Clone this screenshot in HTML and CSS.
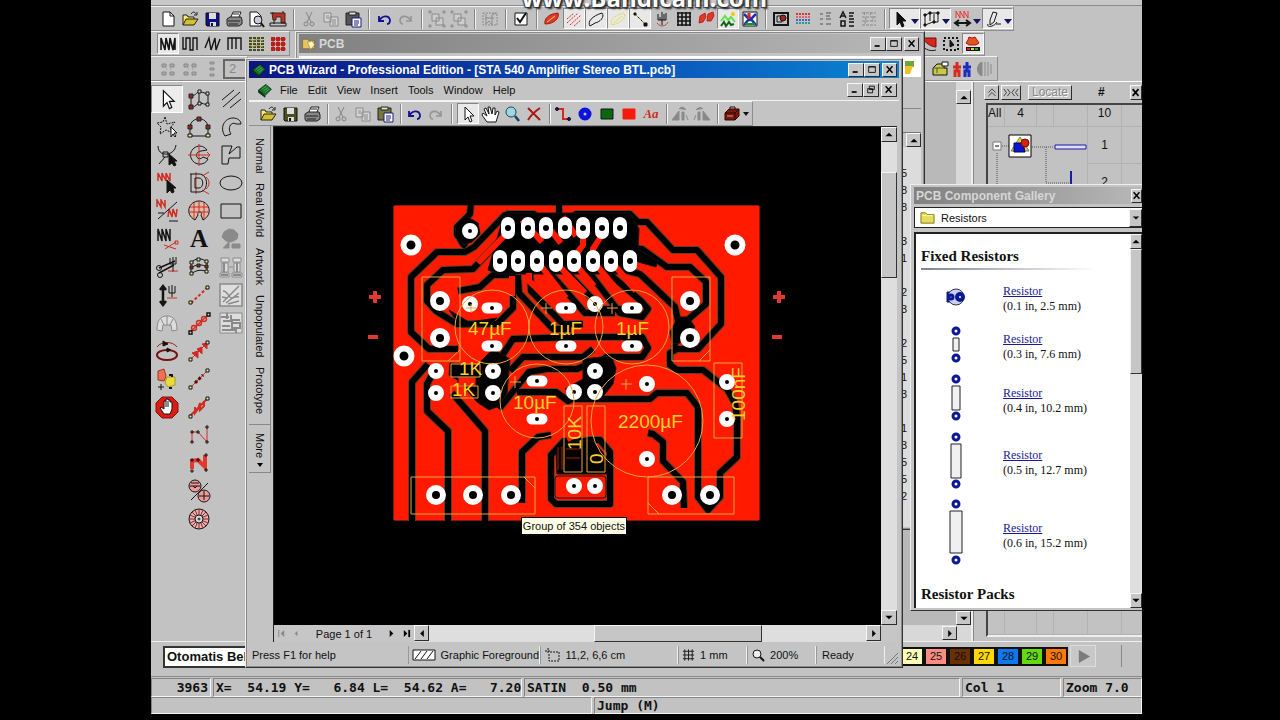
FILE: index.html
```html
<!DOCTYPE html>
<html lang="en">
<head>
<meta charset="utf-8">
<title>PCB Wizard - Professional Edition</title>
<link rel="stylesheet" href="styles.css">
</head>
<body>
<svg class="defs" aria-hidden="true">
  <defs>
    <symbol id="open" viewBox="0 0 20 20"><path d="M3 16V6h4l1 2h6v3" fill="#ffe96a" stroke="#222"/><path d="M3 16l3-6h12l-4 6z" fill="#d2c12b" stroke="#222"/><path d="M11 5c2-3 4-2 5 0m1-2v3h-3" stroke="#222"/></symbol>
    <symbol id="save" viewBox="0 0 20 20"><path d="M4 4h13v13H5l-1-1z" fill="var(--disk,#10108c)" stroke="#111"/><path d="M7 4h7v6H7zM8 13h6v4H8z" fill="#ddd" stroke="none"/><path d="M9 14h2v3H9z" fill="#111" stroke="none"/></symbol>
    <symbol id="print" viewBox="0 0 20 20"><path d="M7 8l2-5h8l-2 5" fill="#fff" stroke="#222"/><path d="M3 10l3-2h11l1 3v4l-3 2H4l-1-2z" fill="#888" stroke="#222"/><path d="M4 12h12M5 15h9M9 5h6" stroke="#222"/></symbol>
    <symbol id="cut" viewBox="0 0 20 20"><path d="M7 3l5 10M13 3L8 13" stroke="#858585"/><circle cx="7" cy="15" r="2" stroke="#858585"/><circle cx="13" cy="15" r="2" stroke="#858585"/></symbol>
    <symbol id="copy" viewBox="0 0 20 20"><path d="M3 4h7v9H3zM9 8h8v9H9z" fill="#d4d4d4" stroke="#8a8a8a"/><path d="M5 7h3M5 9h3M11 11h4M11 13h4M11 15h4" stroke="#8a8a8a"/></symbol>
    <symbol id="paste" viewBox="0 0 20 20"><path d="M3 4h13v12H3z" fill="var(--board,#77773a)" stroke="#222"/><path d="M6 3h7v3H6z" fill="#ddd" stroke="#222"/><path d="M9 9h9v9H9z" fill="#fff" stroke="#1b1b80"/><path d="M11 12h5M11 14h5M11 16h4" stroke="#1b1b80"/></symbol>
    <symbol id="undo" viewBox="0 0 20 20"><path d="M5 7v5h5M5 12c3-6 10-6 11-1 0 2-1 4-3 4" stroke="#101090" stroke-width="1.8"/></symbol>
    <symbol id="redo" viewBox="0 0 20 20"><path d="M15 7v5h-5M15 12c-3-6-10-6-11-1 0 2 1 4 3 4" stroke="#959595" stroke-width="1.6"/></symbol>
    <symbol id="arrow" viewBox="0 0 20 20"><path d="M7 3v13l3-3 2 5 2-1-2-5h4z" fill="#fff" stroke="#111"/></symbol>
    <symbol id="blackarrow" viewBox="0 0 20 20"><path d="M6 3v13l3-3 2 5 2-1-2-5h4z" fill="#111" stroke="#111"/></symbol>
    <symbol id="chip" viewBox="0 0 20 20"><path d="M2 10l9-7 7 6-8 8z" fill="#16702a" stroke="#052c0c"/><path d="M6 9l6-4M8 11l6-4M10 13l5-4" stroke="#55b060"/><path d="M2 10v3l8 6v-2" fill="#0b3a14" stroke="#052c0c"/></symbol>
    <symbol id="min" viewBox="0 0 12 10"><path d="M2 8h6" stroke="#000" stroke-width="2"/></symbol>
    <symbol id="max" viewBox="0 0 12 10"><path d="M2 1.500h8v7H2zM2 2h8" stroke="#000"/></symbol>
    <symbol id="close" viewBox="0 0 12 10"><path d="M2 1l7 8M9 1L2 9" stroke="#000" stroke-width="1.700"/></symbol>
    <symbol id="restore" viewBox="0 0 12 10"><path d="M4 1h6v4H4zM2 4h6v5H2z" fill="#c0c0c0" stroke="#000"/></symbol>
    <symbol id="up" viewBox="0 0 10 10"><path d="M1 7l4-4 4 4z" fill="#000" stroke="none"/></symbol>
    <symbol id="down" viewBox="0 0 10 10"><path d="M1 3l4 4 4-4z" fill="#000" stroke="none"/></symbol>
    <symbol id="left" viewBox="0 0 10 10"><path d="M7 1L3 5l4 4z" fill="#000" stroke="none"/></symbol>
    <symbol id="right" viewBox="0 0 10 10"><path d="M3 1l4 4-4 4z" fill="#000" stroke="none"/></symbol>
    <symbol id="pins" viewBox="0 0 20 20"><path d="M4 5h4v3H4zM12 5h4v3h-4zM4 13h4v3H4zM12 13h4v3h-4zM8 10h1M12 10h1" fill="#aaa" stroke="#888"/></symbol>
    <symbol id="grp" viewBox="0 0 20 20"><path d="M5 5h7v7H5zM9 9h7v7H9z" fill="#ccc" stroke="#8a8a8a"/><path d="M2 2h2v2H2zM16 2h2v2h-2zM2 16h2v2H2zM16 16h2v2h-2z" stroke="#8a8a8a"/></symbol>
  </defs>
</svg>

<div class="desktop">
  <header class="top-edge"><p class="watermark">www.Bandicam.com</p></header>

  <div class="bar bar-main" role="toolbar" aria-label="Standard">
    <button aria-label="New"><svg viewBox="0 0 20 20"><path d="M5 3h7l4 4v10H5z" fill="#fff"/><path d="M12 3v4h4"/></svg></button>
    <button aria-label="Open"><svg><use href="#open"/></svg></button>
    <button aria-label="Save"><svg><use href="#save"/></svg></button>
    <button aria-label="Print"><svg><use href="#print"/></svg></button>
    <button aria-label="Preview"><svg viewBox="0 0 20 20"><path d="M4 3h7l4 4v10H4z" fill="#fff"/><circle cx="12" cy="11" r="4" fill="#ccd"/><path d="M15 14l3 4" stroke-width="2"/></svg></button>
    <button aria-label="Sew"><svg viewBox="0 0 20 20"><path d="M4 4h13v10h-4V8H8v3H5z" fill="#b93428" stroke="#422"/><path d="M2 14h16v3H2zM6 11v4"/><path d="M2 4h4M15 2v2" stroke="#222"/></svg></button>
    <i class="sep"></i>
    <button aria-label="Cut"><svg><use href="#cut"/></svg></button>
    <button aria-label="Copy"><svg><use href="#copy"/></svg></button>
    <button aria-label="Paste" class="blue-board"><svg><use href="#paste"/></svg></button>
    <i class="sep"></i>
    <button aria-label="Undo"><svg><use href="#undo"/></svg></button>
    <button aria-label="Redo"><svg><use href="#redo"/></svg></button>
    <i class="sep"></i>
    <button aria-label="Group"><svg><use href="#grp"/></svg></button>
    <button aria-label="Ungroup"><svg><use href="#grp"/></svg></button>
    <i class="sep"></i>
    <button aria-label="Lock"><svg viewBox="0 0 20 20" class="dim"><path d="M3 4h14v12H3z" stroke-dasharray="2 1"/><path d="M6 5v10l3-3 3 4V6l4-2M5 9h9"/></svg></button>
    <i class="sep"></i>
    <button aria-label="Options"><svg viewBox="0 0 20 20"><path d="M4 4h12v12H4z" fill="#fff"/><path d="M6 9l3 4 6-9" stroke-width="2"/></svg></button>
    <i class="sep"></i>
    <button aria-label="Fill"><svg viewBox="0 0 20 20"><path d="M3 15c-1-6 4-10 13-11 2 5-4 11-13 11z" fill="#e23a22" stroke="#9d1d10"/><path d="M5 13l8-6" stroke="#fb8"/></svg></button>
    <button aria-label="Hatch" class="on"><svg viewBox="0 0 20 20" class="red"><path d="M3 14L14 4M6 16L17 6M3 10l7-6M10 17l7-6" stroke-dasharray="2 1"/></svg></button>
    <button aria-label="Outline" class="on"><svg viewBox="0 0 20 20"><path d="M4 17c-3-4 2-10 12-13 3 4-2 9-7 10z"/></svg></button>
    <button aria-label="Highlight" class="on"><svg viewBox="0 0 20 20"><path d="M4 16c-3-4 2-10 12-12 3 4-3 10-12 12zM6 14l8-7" stroke="#e3dc2a" stroke-dasharray="2 1"/></svg></button>
    <button aria-label="Stitch" class="on"><svg viewBox="0 0 20 20"><path d="M4 4l12 12" stroke="#c80"/><path d="M4 4h2v2H4zM14 14h3v3h-3z" fill="#111"/><path d="M8 8l5 5" stroke-dasharray="2 2"/></svg></button>
    <button aria-label="Needle"><svg viewBox="0 0 20 20"><path d="M6 5v6h8V4M10 3v13M8 8v3M12 5v6"/><path d="M5 14c4 5 9 3 11-1" stroke="#b44"/></svg></button>
    <button aria-label="Grid"><svg viewBox="0 0 20 20" stroke-width="1.600"><path d="M3 4h14M3 8h14M3 12h14M3 16h14M4 3v14M8 3v14M12 3v14M16 3v14"/></svg></button>
    <button aria-label="Pair"><svg viewBox="0 0 20 20"><path d="M3 14l1-7 5-3 1 4-3 5zM11 12l1-7 5-2 1 4-3 5z" fill="#e23a22" stroke="#b22"/></svg></button>
    <button aria-label="Picture" class="on"><svg viewBox="0 0 20 20"><path d="M3 12l4-5 3 4 3-3 4 5" stroke="#5fe04a" stroke-width="2"/><circle cx="15" cy="5" r="2" fill="#ec0" stroke="none"/><path d="M3 17l3-4 2 4 3-4 2 3 3-1" stroke="#11661a" stroke-width="2"/></svg></button>
    <button aria-label="Vector"><svg viewBox="0 0 20 20"><path d="M3 3h14v14H3z" fill="#fff"/><path d="M4 5l6 6 6-6M4 16l6-7 6 7" stroke="#1630c0" stroke-width="2.500"/><path d="M9 4v6" stroke="#d22" stroke-width="3"/><path d="M5 15h10" stroke="#191" stroke-width="2"/></svg></button>
    <i class="sep"></i>
    <button aria-label="Design view"><svg viewBox="0 0 20 20"><path d="M3 4h14v12H3z" stroke-width="2"/><path d="M6 7h5v6H6z"/><circle cx="12" cy="9" r="3" fill="#a22"/></svg></button>
    <button aria-label="Colours"><svg viewBox="0 0 20 20" stroke-width="2" stroke-dasharray="2 1"><path d="M3 5h14" stroke="#d33"/><path d="M3 8h14" stroke="#d66"/><path d="M3 11h14" stroke="#46c"/><path d="M3 14h14" stroke="#398"/></svg></button>
    <button aria-label="List"><svg viewBox="0 0 20 20" class="dim"><path d="M5 5h3M11 4h5M11 7h4M5 10h3M11 10h5M5 15h3M11 15h5" stroke-width="2"/></svg></button>
    <button aria-label="Sort text"><svg viewBox="0 0 20 20"><path d="M3 9l3-6 3 6M4 7h4M12 4h5M12 7h4M12 10h5M4 12h4v5H4zM12 13h5M12 17h5" stroke-width="1.500"/></svg></button>
    <button aria-label="Table"><svg viewBox="0 0 20 20" class="dim"><path d="M3 4h14M3 8h14M3 12h14M3 16h14M6 3l-1 4M12 3l-1 4M15 7l-2 5M7 8l-1 7" stroke-dasharray="3 1"/></svg></button>
    <i class="sep"></i>
    <button aria-label="Select mode" class="wide on"><svg><use href="#blackarrow"/></svg><b></b></button>
    <button aria-label="Reshape mode" class="wide on"><svg viewBox="0 0 20 20"><path d="M3 16V6l5-2h8v9h-5l-8 3M8 4v8M12 5v8"/><path d="M2 5h2v2H2zM7 3h2v2H7zM15 3h2v2h-2zM2 15h2v2H2zM11 12h2v2h-2z" fill="#111"/></svg><b></b></button>
    <button aria-label="Stitch mode" class="wide"><svg viewBox="0 0 20 20"><path d="M3 9V2l4 7V2l4 7V2l4 7V2" stroke="#e33"/><path d="M3 14h13M6 11l-4 3 4 3M13 11l4 3-4 3" stroke-width="2"/></svg><b></b></button>
    <button aria-label="Draw mode" class="wide on"><svg viewBox="0 0 20 20"><path d="M9 3l4 1-3 9-4 3 0-5zM4 15c-2 4 6 3 9-2M12 15h5"/></svg><b></b></button>
  </div>

  <div class="bar-row">
    <div class="bar" role="toolbar" aria-label="Stitch types">
      <button aria-label="Satin" class="on"><svg viewBox="0 0 20 20"><path d="M3 16V4l4 12 1-12 3 12 1-12 3 12 2-12v12" stroke-width="1.600"/></svg></button>
      <button aria-label="E stitch"><svg viewBox="0 0 20 20"><path d="M3 3v12h3V4h4v12h3V4h4v12" stroke-width="1.400"/></svg></button>
      <button aria-label="Zigzag"><svg viewBox="0 0 20 20"><path d="M3 14L7 4l2 12L13 4l1 12 4-11" stroke-width="1.400"/></svg></button>
      <button aria-label="Comb"><svg viewBox="0 0 20 20"><path d="M4 16V4h13v12M8 4v11M12 4v11" stroke-width="1.400"/></svg></button>
      <button aria-label="Tatami"><svg viewBox="0 0 20 20"><path d="M3 4h15M3 7h15M3 10h15M3 13h15M3 16h15" stroke="#454a18" stroke-width="2" stroke-dasharray="3 1"/><path d="M3 5l4 2 4-2 6 2M3 11l4 2 4-2 6 2" stroke="#9a9a3c"/></svg></button>
      <button aria-label="Motif"><svg viewBox="0 0 20 20"><path d="M3 5h15M3 10h15M3 15h15M5 3v14M10 3v14M15 3v14" stroke="#a12a24"/><path d="M3 5h14M3 10h14M3 15h14" stroke="#b91f18" stroke-width="4" stroke-dasharray="4 1"/></svg></button>
    </div>
    <div class="bar far-a" role="toolbar" aria-label="Colour blending">
      <button aria-label="Blend"><svg viewBox="0 0 20 20"><path d="M3 4h14v9C12 13 7 9 3 4z" fill="#d9261c" stroke="#611"/><path d="M4 13c5 4 9 4 13 3"/></svg></button>
      <button aria-label="Marquee"><svg viewBox="0 0 20 20"><path d="M3 4h14v12H3z" stroke-dasharray="2 2" stroke-width="2"/><path d="M9 6v7l4-2z" fill="#111"/></svg></button>
      <button aria-label="Flower" class="on"><svg viewBox="0 0 20 20"><path d="M6 3l3 1 3-1 2 3 2 3-3 2H6L3 9l2-3z" fill="#d52" stroke="#b11"/><path d="M3 15h14" stroke-width="4"/><path d="M4 15h3" stroke="#d22" stroke-width="2"/><path d="M8 15h3" stroke="#dd2" stroke-width="2"/><path d="M12 15h3" stroke="#2a2" stroke-width="2"/></svg></button>
    </div>
  </div>

  <div class="bar-row">
    <div class="bar" role="toolbar" aria-label="Underlay">
      <button aria-label="Mirror A"><svg><use href="#pins"/></svg></button>
      <button aria-label="Mirror B"><svg><use href="#pins"/></svg></button>
      <button aria-label="Mirror C"><svg viewBox="0 0 20 20" class="dim"><path d="M8 3h4v2H8zM8 9h4v2H8zM8 15h4v2H8z" fill="#aaa"/></svg></button>
      <input class="count" aria-label="Repeat count" value="2">
    </div>
    <div class="bar far-b" role="toolbar" aria-label="Properties">
      <button aria-label="Properties"><svg viewBox="0 0 20 20"><path d="M3 9l4-4 7 0v4h3v7H3z" fill="#c8c84a"/><path d="M12 3h6v4h-6z" fill="#fff"/><path d="M7 9v5M3 9h13" stroke="#553"/></svg></button>
      <button aria-label="Pair of figures"><svg viewBox="0 0 20 20" stroke-width="3"><path d="M1 8h8M5 3v9M3 18v-6h4v6" stroke="#d92a20"/><path d="M11 8h8M15 3v9M13 18v-6h4v6" stroke="#1b2bc4"/></svg></button>
      <button aria-label="Density"><svg viewBox="0 0 20 20" class="dim"><path d="M8 3v14c-6-2-6-12 0-14z" fill="#888"/><path d="M11 3v14M14 3v14M17 5v10"/></svg></button>
    </div>
  </div>

  <main class="work">
    <div class="tools" role="toolbar" aria-label="Design tools">
      <button aria-label="Select" class="on"><svg><use href="#arrow"/></svg></button>
      <button aria-label="Reshape"><svg viewBox="0 0 24 24"><path d="M4 20V8c4 2 5-3 9-3s4 2 8 1v11c-4 1-5-1-8-1s-5 5-9 4M12 5v12"/><path class="h" d="M2 18h4v4H2zM2 7h4v4H2z"/><path d="M11 3h3v3h-3zM19 5h3v3h-3zM19 16h3v3h-3zM11 15h3v3h-3z" fill="#ddd"/></svg></button>
      <button aria-label="Run"><svg viewBox="0 0 24 24"><path d="M3 13L15 3M4 20L21 5M11 21L22 12"/></svg></button>
      <button aria-label="Polygon select"><svg viewBox="0 0 24 24"><path d="M10 2l2 7 8-2-5 6 3 5-7-3-6 4 1-7-4-4 6-1z" stroke-dasharray="2 1"/><path d="M16 12v10l2-3 2 3 1-1-2-3h3z" fill="#fff"/></svg></button>
      <button aria-label="Arch"><svg viewBox="0 0 24 24"><path d="M3 21V12C4 1 20 1 21 12v9z"/><path class="h" d="M1 10h4v4H1zM19 10h4v4h-4zM10 2h4v4h-4z"/><path class="n" d="M1 19h4v3H1zM19 19h4v3h-4z"/></svg></button>
      <button aria-label="Ring part"><svg viewBox="0 0 24 24"><path d="M6 21C0 12 6 3 14 3c5 0 8 3 8 6h-5c-5-3-9 4-5 10z"/></svg></button>
      <button aria-label="Edit node"><svg viewBox="0 0 24 24"><path d="M3 3c0 12 17 10 18-1M8 9h5v5H8zM10 14l-6 7"/><path d="M14 11v11l3-2 2 3 2-1-2-4h3z" fill="#111"/></svg></button>
      <button aria-label="Complex fill"><svg viewBox="0 0 24 24"><path d="M20 7C13-2 1 6 4 15c3 8 14 8 17 1l-5-2c-6 6-10-5-2-6z"/><path class="r" d="M1 12h22M12 1v22M20 9l3 3-3 3"/></svg></button>
      <button aria-label="Closed shape"><svg viewBox="0 0 24 24"><path d="M3 3h10l-3 8 8-7h3v11H10l-1 6H3z"/></svg></button>
      <button aria-label="Stitch edit"><svg viewBox="0 0 24 24"><path class="r" d="M3 10V2l4 8V2l4 8V2l4 8V2" stroke-width="1.500"/><path d="M12 9v13l3-3 2 3 2-1-1-4h3z" fill="#111"/></svg></button>
      <button aria-label="Fusion fill"><svg viewBox="0 0 24 24"><path class="r" d="M9 1v22M15 5l7-4M15 19l7 4M19 6c4 3 4 9 0 12"/><path d="M3 3h9c10 0 10 18 0 18H4V3M8 7h4c5 0 5 10 0 10H8z"/></svg></button>
      <button aria-label="Ellipse"><svg viewBox="0 0 24 24"><ellipse cx="12" cy="12" rx="11" ry="7"/></svg></button>
      <button aria-label="Travel"><svg viewBox="0 0 24 24"><path class="r" d="M2 8V1l4 7V1l4 7V1M13 18l1-8 3 8 1-8 3 8 1-8" stroke-width="1.500"/><path d="M3 20L22 3M3 14h6M14 22h9"/></svg></button>
      <button aria-label="Tatami fill"><svg viewBox="0 0 24 24"><path d="M8 21C-3 15 2 2 12 2s15 13 4 19l-2-5c3-4-5-4-3 0z" fill="#dba"/><path class="r" d="M3 8h18M2 13h20M7 4v16M12 2v12M17 4v16"/></svg></button>
      <button aria-label="Rectangle"><svg viewBox="0 0 24 24"><path d="M2 5h20v14H2z"/></svg></button>
      <button aria-label="Stitch cut"><svg viewBox="0 0 24 24"><path d="M3 14V2l4 12V2l4 12V2l4 12V2" stroke-width="1.500"/><path class="r" d="M9 18l12 4M10 22l11-7M20 14h3v3h-3z"/></svg></button>
      <button aria-label="Lettering" class="letter">A</button>
      <button aria-label="Flower"><svg viewBox="0 0 24 24" class="dim"><path d="M10 2l5 1 4 4-1 5-6 3-5-1-4-4 2-5zM10 14v7h-6M13 17h8v4h-8z" fill="#8a8a8a"/></svg></button>
      <button aria-label="Trim"><svg viewBox="0 0 24 24"><path d="M4 13l16-7M4 18l15-8" stroke-width="1.500"/><circle cx="4" cy="13" r="2.500"/><circle cx="5" cy="20" r="2.500"/><path d="M15 3v6h6V2M18 2v15"/><path class="r" d="M13 16h10"/></svg></button>
      <button aria-label="Bridge"><svg viewBox="0 0 24 24"><path d="M4 19V8c5-6 11-5 16-1v10c-5-3-11-2-16 2zM4 13c5-4 11-4 16-1"/><path class="n" d="M3 6h3v3H3zM10 3h3v3h-3zM18 5h3v3h-3zM3 17h3v3H3zM18 15h3v3h-3z"/><path class="h" d="M3 11h3v3H3zM10 9h3v3h-3zM18 10h3v3h-3z"/></svg></button>
      <button aria-label="Columns"><svg viewBox="0 0 24 24" class="dim"><path d="M2 3h8v4H2zM14 3h8v4h-8zM3 8h6v9H3zM15 8h6v9h-6zM1 18h9v4H1zM13 18h10v4H13zM10 12h4" fill="#ddd"/><path d="M5 8v9M18 8v9M2 20h7M14 20h8" stroke-width="2"/></svg></button>
      <button aria-label="Tie"><svg viewBox="0 0 24 24"><path d="M8 4v17M5 7l3-4 3 4M5 18l3 4 3-4" stroke-width="2.500"/><path d="M14 3v7h6V3M17 2v12"/><path class="r" d="M12 15h10"/></svg></button>
      <button aria-label="Run line"><svg viewBox="0 0 24 24"><path class="r" d="M4 20L20 5" stroke-dasharray="3 2" stroke-width="2"/><path class="n" d="M2 18h3v3H2zM19 3h3v3h-3z"/></svg></button>
      <button aria-label="Texture"><svg viewBox="0 0 24 24" class="dim" stroke-width="1.500"><path d="M1 1h22v22H1z" fill="#ddd"/><path d="M4 19L20 3M4 8c6 0 5 8 9 7s3-2 7-1M7 20L20 10M3 14l5 1M9 21l11-3"/></svg></button>
      <button aria-label="Fan"><svg viewBox="0 0 24 24" class="dim"><path d="M2 19C2 10 5 5 12 5s10 5 10 14l-5 1-1-6H8l-1 6zM6 8l3 6M12 5v9M18 8l-3 6" fill="#ddd"/></svg></button>
      <button aria-label="Beads"><svg viewBox="0 0 24 24" class="red" stroke-width="1.400"><path d="M3 21L21 4"/><circle cx="7" cy="17" r="2.500"/><circle cx="12" cy="12" r="2.500"/><circle cx="17" cy="8" r="2.500"/><path class="n" d="M2 20h3v3H2zM20 2h3v3h-3z"/></svg></button>
      <button aria-label="Pattern"><svg viewBox="0 0 24 24" class="dim"><path d="M1 2h22v20H1z" fill="#ddd"/><path d="M2 6h8M12 4v5h9M4 10h10M13 12h8v5h-8zM3 15h8M3 19h14M8 2v6M17 17v5" stroke-width="2"/></svg></button>
      <button aria-label="Rotate"><svg viewBox="0 0 24 24"><path d="M2 8c4-6 16-6 20 0" stroke="#922"/><path d="M8 2v5l5-2z" fill="#111"/><ellipse cx="12" cy="16" rx="10" ry="5" stroke="#711" stroke-width="2"/><path d="M12 9v4l4-2z" fill="#111"/></svg></button>
      <button aria-label="Arrow run"><svg viewBox="0 0 24 24" class="red"><path d="M3 21L21 3M5 14l6 5v-7zM10 10l5 5V8zM15 5l5 5V4z" fill="#d22"/><path class="n" d="M2 19h3v3H2zM19 2h3v3h-3z"/></svg></button><i></i>
      <button aria-label="Thread"><svg viewBox="0 0 24 24"><path d="M3 4l6-2 2 7-2 5-6-1z" fill="#ef7052" stroke="#a32"/><path d="M12 10h8v8l-7 2-3-4z" fill="#e6de38" stroke="#a93"/><path d="M3 20h6M6 17v6"/><path d="M14 8h3v2M14 21h3" stroke-width="2"/></svg></button>
      <button aria-label="Dotted run"><svg viewBox="0 0 24 24"><path class="r" d="M4 20L20 4"/><path d="M8 16l8-8" stroke-width="3" stroke-dasharray="3 2" stroke="#511"/><path class="n" d="M2 19h3v3H2zM19 2h3v3h-3z"/></svg></button><i></i>
      <button aria-label="Stop"><svg viewBox="0 0 24 24"><path d="M7 2h10l6 6v9l-6 6H7l-6-6V8z" fill="#db1c14" stroke="#8b0d08"/><path d="M9 19l-4-6 1-1 3 2V6h2V4h2v1h2v2h2v7l-2 5z" fill="#fff"/><path d="M11 6v6M13 6v6"/></svg></button>
      <button aria-label="Leaf run"><svg viewBox="0 0 24 24" class="red"><path d="M3 21L21 3M8 12v6l3-4 2-6v7l4-4V6" stroke-width="2"/><path class="n" d="M2 20h3v3H2zM19 2h3v3h-3z"/></svg></button><i></i>
      <i></i><button aria-label="Nodes"><svg viewBox="0 0 24 24"><path class="r" d="M5 19V9h6l9 10V4"/><path d="M4 18h2v2H4zM4 8h2v2H4zM10 8h2v2h-2zM19 18h2v2h-2zM19 3h2v2h-2z"/></svg></button><i></i>
      <i></i><button aria-label="Wide nodes"><svg viewBox="0 0 24 24"><path d="M5 18V10l6-1 7 7V4" stroke="#e3382c" stroke-width="4"/><path d="M4 19h2v2H4zM4 8h2v2H4zM10 8h2v2h-2zM18 18h2v2h-2zM18 3h2v2h-2z"/></svg></button><i></i>
      <i></i><button aria-label="Buttons"><svg viewBox="0 0 24 24"><circle cx="8" cy="7" r="6" fill="#e99"/><circle cx="17" cy="17" r="6" fill="#e99"/><path d="M3 7h10M4 4h8M12 17h10M17 12v9M4 21L21 4M6 7l2 2 2-2"/></svg></button><i></i>
      <i></i><button aria-label="Wheel"><svg viewBox="0 0 24 24"><circle cx="12" cy="12" r="10" fill="#e6b5ad"/><path d="M12 2v20M2 12h20M5 5l14 14M19 5L5 19M8 3l8 18M3 8l18 8M3 16l18-8M8 21l8-18" stroke="#823"/><circle cx="12" cy="12" r="4" fill="#ddd"/><circle cx="12" cy="12" r="1"/></svg></button><i></i>
    </div>
    <div class="mdi">
      <div class="mdi-scroll"><button class="cap" aria-label="Scroll up"><svg><use href="#up"/></svg></button><span></span><button class="cap" aria-label="Scroll down"><svg><use href="#down"/></svg></button></div>
      <div class="mdi-foot"><button class="cap" aria-label="Scroll right"><svg><use href="#right"/></svg></button></div>
    </div>
    <aside class="objects">
      <div class="objects-head">
        <button class="cap" aria-label="Collapse"><svg viewBox="0 0 10 10"><path d="M1 5l4-4 4 4M1 9l4-4 4 4" stroke="#333"/></svg></button>
        <button class="cap big" aria-label="Fit"><svg viewBox="0 0 18 10"><path d="M1 1l3 4-3 4M5 1l3 4-3 4M13 1l-3 4 3 4M17 1l-3 4 3 4" stroke="#333"/></svg></button>
        <button class="cap locate" disabled>Locate</button>
        <strong>#</strong>
        <button class="cap end" aria-label="Close panel"><svg viewBox="0 0 12 10"><path d="M2 1l7 8M9 1L2 9" stroke="#000" stroke-width="2"/></svg></button>
      </div>
      <table class="objects-tree">
        <colgroup><col class="c1"><col class="c2"><col class="c1"><col class="c3"><col class="c3"><col></colgroup>
        <tr class="labels"><td>All</td><td>4</td><td></td><td></td><td>10</td><td></td></tr>
        <tr class="tall"><td colspan="4" rowspan="2"><svg class="tree" viewBox="0 0 102 66"><path d="M9 23v43M14 16h7M44 17h22M58 17v36h24" stroke="#555" stroke-dasharray="1 1"/><path d="M5 12h8v8H5z" fill="#fff" stroke="#777"/><path d="M7 16h4" stroke="#000"/><path d="M21 5h22v22H21z" fill="#fff" stroke="#000"/><path d="M32 7l9 14H23z" fill="#e5d52b" stroke="#776"/><path d="M26 13h9l2 9H26z" fill="#0a17cf" stroke="#006"/><circle cx="37" cy="13" r="4" fill="#e21b10" stroke="#611"/><path d="M67 15h31v4H67z" fill="#ddf" stroke="#1c1c9c"/><path d="M83 41v16" stroke="#1c1c9c" stroke-width="2"/></svg></td><td>1</td><td></td></tr>
        <tr class="tall"><td>2</td><td></td></tr>
        <tr class="fill"><td></td><td></td><td></td><td></td><td></td><td></td></tr>
      </table>
    </aside>
  </main>

  <div class="palette-row">
    <select class="stitch" aria-label="Stitch mode"><option>Otomatis Belakang</option></select>
    <div class="palette">
      <button class="y1">24</button><button class="p1">25</button><button class="b1">26</button><button class="y2">27</button><button class="b2">28</button><button class="g1">29</button><button class="o1">30</button>
      <button class="next" aria-label="More colours"><svg viewBox="0 0 16 16"><path d="M3 1l12 7-12 7z" fill="#7c7c7c" stroke="none"/></svg></button>
    </div>
  </div>
  <div class="status mono"><span class="s-a">3963</span><span class="s-b">X=  54.19 Y=   6.84 L=  54.62 A=   7.20</span><span class="s-c">SATIN  0.50 mm</span><span class="s-d">Col 1</span><span class="s-e">Zoom 7.0</span></div>
  <div class="status mono last"><span class="s-left"></span><span class="s-jump">Jump (M)</span></div>

  <section class="window back" aria-label="PCB">
    <div class="title gray"><svg viewBox="0 0 20 20" class="ti"><path d="M2 16V4h6l2 2h7v10z" fill="#e8c45c" stroke="#764"/><path d="M8 8l6-2 3 5-5 6z" fill="#fff3c0" stroke="#a84"/></svg><span>PCB</span>
      <button class="cap" aria-label="Minimize"><svg><use href="#min"/></svg></button><button class="cap" aria-label="Maximize"><svg><use href="#max"/></svg></button><button class="cap gap" aria-label="Close"><svg><use href="#close"/></svg></button></div>
    <div class="back-strip"><svg viewBox="0 0 16 20"><path d="M0 5h9v6H0z" fill="#6fa637" stroke="none"/><path d="M0 10h8l-3 8H0z" fill="#eec22e" stroke="none"/></svg></div>
    <div class="back-gray"></div>
    <div class="back-scroll"><button class="cap" aria-label="Scroll up"><svg><use href="#up"/></svg></button></div>
    <div class="back-list"><span>5<br>8<br>8<br><br>3<br>1<br><br>2<br>3<br><br>2<br>5<br>1<br>3<br><br>1<br>3<br>5<br>5<br>2</span></div>
  </section>

  <section class="window wizard" aria-label="PCB Wizard">
    <div class="title blue"><svg class="ti"><use href="#chip"/></svg><span>PCB Wizard - Professional Edition - [STA 540 Amplifier Stereo BTL.pcb]</span>
      <button class="cap" aria-label="Minimize"><svg><use href="#min"/></svg></button><button class="cap" aria-label="Maximize"><svg><use href="#max"/></svg></button><button class="cap gap" aria-label="Close"><svg><use href="#close"/></svg></button></div>
    <nav class="menu"><svg class="mi"><use href="#chip"/></svg><button>File</button><button>Edit</button><button>View</button><button>Insert</button><button>Tools</button><button>Window</button><button>Help</button>
      <span class="caps"><button class="cap" aria-label="Minimize document"><svg><use href="#min"/></svg></button><button class="cap" aria-label="Restore document"><svg><use href="#restore"/></svg></button><button class="cap gap" aria-label="Close document"><svg><use href="#close"/></svg></button></span></nav>
    <div class="bar wbar" role="toolbar" aria-label="PCB tools">
      <button aria-label="Open"><svg><use href="#open"/></svg></button>
      <button aria-label="Save" class="olive"><svg><use href="#save"/></svg></button>
      <button aria-label="Print"><svg><use href="#print"/></svg></button>
      <i class="sep"></i>
      <button aria-label="Cut"><svg><use href="#cut"/></svg></button>
      <button aria-label="Copy"><svg><use href="#copy"/></svg></button>
      <button aria-label="Paste"><svg><use href="#paste"/></svg></button>
      <i class="sep"></i>
      <button aria-label="Undo"><svg><use href="#undo"/></svg></button>
      <button aria-label="Redo"><svg><use href="#redo"/></svg></button>
      <i class="sep double"></i>
      <button aria-label="Select" class="on"><svg><use href="#arrow"/></svg></button>
      <button aria-label="Pan"><svg viewBox="0 0 20 20"><path d="M7 18l-5-7 1-2 4 3-3-7 2-1 3 6-1-7h2l2 7 1-6 2 0v7l2-4 2 1-3 10z" fill="#fff"/></svg></button>
      <button aria-label="Zoom"><svg viewBox="0 0 20 20"><circle cx="9" cy="8" r="5" fill="#9fd9de" stroke="#245"/><path d="M13 12l4 5" stroke="#146" stroke-width="2.500"/></svg></button>
      <button aria-label="Delete"><svg viewBox="0 0 20 20"><path d="M4 4l12 12M16 4C10 8 7 11 4 16" stroke="#a61b12" stroke-width="2"/></svg></button>
      <i class="sep"></i>
      <button aria-label="Track"><svg viewBox="0 0 20 20"><path d="M4 5h6v10h6" stroke="#d5281c" stroke-width="2"/><circle cx="4" cy="5" r="1.500" fill="#11c"/><circle cx="16" cy="15" r="1.500" fill="#11c"/></svg></button>
      <button aria-label="Pad"><svg viewBox="0 0 20 20"><circle cx="10" cy="10" r="4" stroke="#0a14dd" stroke-width="5"/></svg></button>
      <button aria-label="Green area"><svg viewBox="0 0 20 20"><path d="M4 5h12v10H4z" fill="#0b680e"/></svg></button>
      <button aria-label="Copper area"><svg viewBox="0 0 20 20"><path d="M4 5h12v10H4z" fill="#f51a0b" stroke="#f51a0b"/></svg></button>
      <button aria-label="Text" class="aa">Aa</button>
      <i class="sep"></i>
      <button aria-label="Rotate left"><svg viewBox="0 0 20 20" class="dim"><path d="M2 16l7-9v9zM12 8h2v8h-2zM16 11l2 5M9 5c3-3 5-2 7 1" fill="#888"/></svg></button>
      <button aria-label="Rotate right"><svg viewBox="0 0 20 20" class="dim"><path d="M18 16l-7-9v9zM6 8h2v8H6zM4 11l-2 5M4 6c3-3 5-3 7-1" fill="#888"/></svg></button>
      <i class="sep"></i>
      <button aria-label="Components" class="wide"><svg viewBox="0 0 20 20"><path d="M3 9l4-4h10v7l-4 4H3z" fill="#7c1810" stroke="#2c0805"/><path d="M3 9h10v7M13 9l4-4M8 5V3h5v2" stroke="#2c0805"/><path d="M5 12h6" stroke="#d96"/></svg><b></b></button>
    </div>
    <div class="wbody">
      <div class="tabs"><button>Normal</button><button>Real World</button><button>Artwork</button><button>Unpopulated</button><button>Prototype</button><button class="more">More&nbsp; <svg viewBox="0 0 6 6"><path d="M0 1h6L3 5z" fill="#000" stroke="none"/></svg></button></div>
      <div class="view">
        <div class="canvas">
          <svg class="pcb" viewBox="274 128 607 498">
            <defs>
              <clipPath id="board"><rect x="393" y="206" width="367" height="316" rx="3"/></clipPath>
              <g id="gaps" fill="none" stroke-linejoin="round">
                <path d="M471 204l-1 11-13 13v7l6 10 3 3M504 217l-30 31-9 5h-28l-26 25v55l18 17h29"/>
                <path d="M503 217l5-2h26l8 8M570 220l6-5h54l8 8h9l26 28h24l24 27v47l-23 25h-21l-7 4v12l7 5h26l24 19 8 14 2 14v40l-17 16v24l-12 13-10-13v-90l-11-14h-30l-7 6h-80"/>
                <path d="M559 204v10"/>
                <path d="M505 236l-32 34-30 1-16 15v16l9 10 21 13h40l16-16V276h-20l-13 12-22 4"/>
                <path d="M518 276l1 18 34 36h18M530 272l1 20 32 33h20M548 272l37 42h30M566 272l36 38h20M588 272l32 42 22 4 6-8-7-8-35-30"/>
                <path d="M611 247l31 3 25 18h23l16 15v22l-23 20-6 12M620 270l20 5 35 33 4 18-5 23"/>
                <path d="M498 363l15-23 63-2h66l6 11-6 9h-36l-8 8M510 372l13-14h60l10-8"/>
                <path d="M428 365l-16 18v141M434 372l-7 13v27l21 20v92M452 394l33 38v92"/>
                <path d="M499 410l20-25 10-12 18-3h30l14-6M517 393h39l12 9 20-9"/>
                <path d="M551 436l-13 2-16 15v51"/>
                <path d="M588 442h-24l-13 14v44l5 5h54v-52l-10-12h-14"/>
                <path d="M648 434l5 1 10 8v19l20 21 1 26"/>
              </g>
            </defs>
            <g clip-path="url(#board)">
            <rect x="393" y="206" width="367" height="316" fill="#ff1a00"/>
            <use href="#gaps" stroke="#653d25" stroke-width="8"/>
            <use href="#gaps" stroke="#000" stroke-width="6"/>
            <g fill="#000">
              <path d="M456 225l10-8 12 7 2 11-8 8-8 3-9-8z"/>
              <path d="M503 219l7-5h120l9 16-1 20 20 12-2 6-25-7-10 14H498l-10-4z"/>
              <path d="M450 364l27 2 16-16 17 10-3 34-8 13-10 4-12-8-18-21-10-6zM583 360l28-3 5 12-3 16-12 15h-22l-14-10 18-10z"/>
              <path d="M449 311l20 12 28-4-8 8-28 1zM678 318h10l7 10-15 16-8 1-2-12z"/>
              <path d="M556 452l14-10h23l14 16v17h-50z"/>
            </g>
            <g stroke="#ff1a00" stroke-width="6" fill="none">
              <path d="M522 221l20 22M543 222l18 22M563 218l13 19M583 236v10l-9 12M602 236l-9 14v10M518 262v-8M478 264l28-29M529 274v8l40 38M512 277v20M537 262l29 37M556 264l29 30M574 264l20 23M593 262l29 35M611 262l25 30M630 262l14 8 36 28M567 440l14-6"/>
            </g>
            <rect x="458" y="378" width="18" height="9" fill="#ff1a00"/>
            <rect x="555" y="477" width="51" height="22" rx="3" fill="#ff1a00"/>
            <path d="M558 448v23M562 448v23M566 459h14M566 450h14" stroke="#a51e0e" fill="none"/>
            </g>
            <g class="rings"><circle cx="411" cy="246" r="7.500"/><circle cx="735" cy="246" r="7.500"/><circle cx="404" cy="357" r="7.500"/>
              <circle cx="440" cy="302" r="7"/><circle cx="440" cy="339" r="7"/><circle cx="690" cy="302" r="7"/><circle cx="690" cy="339" r="7"/><circle cx="436" cy="496" r="7"/><circle cx="473" cy="496" r="7"/><circle cx="511" cy="496" r="7"/><circle cx="672" cy="496" r="7"/><circle cx="710" cy="496" r="7"/></g>
            <g class="rings"><circle cx="470" cy="232" r="5"/><circle cx="470" cy="305" r="5"/><circle cx="595" cy="305" r="5"/><circle cx="436" cy="372" r="5"/><circle cx="436" cy="394" r="5"/><circle cx="493" cy="372" r="5"/><circle cx="493" cy="394" r="5"/><circle cx="595" cy="372" r="5"/><circle cx="595" cy="393" r="5"/><circle cx="574" cy="393" r="5"/><circle cx="647" cy="385" r="5"/><circle cx="647" cy="460" r="5"/><circle cx="727" cy="383" r="5"/><circle cx="727" cy="420" r="5"/><circle cx="574" cy="487" r="5"/><circle cx="595" cy="487" r="5"/></g>
            <g class="pads" stroke-width="14"><path d="M508 225v8M528 225v8M546 225v8M565 225v8M583 225v8M602 225v8M620 225v8M500 258v8M518 258v8M537 258v8M556 258v8M574 258v8M593 258v8M611 258v8M630 258v8"/></g>
            <g class="pads" stroke-width="11"><path d="M487 309h10M487 347h10M561 309h10M561 347h10M627 309h10M627 347h10M532 382h10M532 420h10"/></g>
            <g class="dots" stroke-width="6"><path d="M508 229h0M528 229h0M546 229h0M565 229h0M583 229h0M602 229h0M620 229h0M500 262h0M518 262h0M537 262h0M556 262h0M574 262h0M593 262h0M611 262h0M630 262h0"/></g>
            <g class="dots" stroke-width="4"><path d="M492 309h0M492 347h0M566 309h0M566 347h0M632 309h0M632 347h0M537 382h0M537 420h0"/></g>
            <g stroke="#e9a640" fill="none">
              <circle cx="492" cy="328" r="37"/><circle cx="566" cy="328" r="37"/><circle cx="632" cy="328" r="37"/><circle cx="537" cy="402" r="37"/><circle cx="647" cy="422" r="56"/>
              <path d="M422 278h38v84h-38zM448 362l12-11M672 278h38v84h-38zM699 362l11-11M451 365h29v13h-29zM451 387h27v12h-27zM411 478h124v37H411zM524 478l11 11M648 478h86v37h-86zM648 504l11 11M564 407h18v66h-18zM587 407h18v66h-18zM714 364h28v75h-28z"/>
              <path d="M541 309h11M546 304v11M607 309h11M612 304v11M510 383h11M515 377v12M621 385h11M626 380v11M466 309h10M471 305v9"/>
            </g>
            <g class="silk"><text x="468" y="336">47µF</text><text x="549" y="336">1µF</text><text x="616" y="336">1µF</text><text x="513" y="410">10µF</text><text x="618" y="429">2200µF</text><text x="459" y="376">1K</text><text x="452" y="397">1K</text><text transform="translate(581 451) rotate(-90)">10K</text><text transform="translate(603 465) rotate(-90)">0</text><text transform="translate(745 422) rotate(-90)">100nF</text></g>
            <path d="M369 298h12M375 292v12M773 298h12M779 292v12M368 338h10M772 338h10" stroke="#df3a30" stroke-width="4"/>
          </svg>
          <span class="tip" role="tooltip">Group of 354 objects</span>
        </div>
        <div class="vscroll"><button class="cap" aria-label="Scroll up"><svg><use href="#up"/></svg></button><span class="pre"></span><span class="thumb"></span><span class="rest"></span><button class="cap" aria-label="Scroll down"><svg><use href="#down"/></svg></button></div>
        <div class="hscroll"><div class="pager"><button disabled aria-label="First page"><svg viewBox="0 0 10 10"><path d="M2 1v8" stroke="#888"/><path d="M8 1L4 5l4 4z" fill="#888" stroke="none"/></svg></button><button disabled aria-label="Previous page"><svg viewBox="0 0 10 10"><path d="M6 2L3 5l3 3z" fill="#888" stroke="none"/></svg></button><span>Page 1 of 1</span><button aria-label="Next page"><svg><use href="#right"/></svg></button><button aria-label="Last page"><svg viewBox="0 0 10 10"><path d="M8 1v8" stroke="#000" stroke-width="2"/><path d="M2 1l4 4-4 4z" fill="#000" stroke="none"/></svg></button></div>
          <button class="cap" aria-label="Scroll left"><svg><use href="#left"/></svg></button><span class="h-pre"></span><span class="h-thumb"></span><span class="h-rest"></span><button class="cap" aria-label="Scroll right"><svg><use href="#right"/></svg></button></div>
        <div class="corner"></div>
      </div>
    </div>
    <footer class="wstatus"><span class="w1">Press F1 for help</span><span class="w2"><svg viewBox="0 0 24 12"><path d="M1 1h22v10H1z" fill="#fff"/><path d="M3 10l6-8M9 10l6-8M15 10l6-8"/></svg>Graphic Foreground</span><span class="w3"><svg viewBox="0 0 16 14"><path d="M4 0v5M1 3h5M6 4h9v9H5V6" stroke-dasharray="2 1"/></svg>11,2, 6,6 cm</span><span class="w4"><svg viewBox="0 0 14 12"><path d="M1 2h12M1 6h12M1 10h12M3 0v12M7 0v12M11 0v12"/></svg>1 mm</span><span class="w5"><svg viewBox="0 0 14 14"><circle cx="6" cy="6" r="4" fill="#eee"/><path d="M9 9l4 4" stroke-width="2"/></svg>200%</span><span class="w6">Ready</span><svg class="grip" viewBox="0 0 14 14"><path d="M2 13L13 2M6 13l7-7M10 13l3-3" stroke="#777"/></svg></footer>
  </section>

  <section class="window gallery" aria-label="PCB Component Gallery">
    <div class="title gray"><span>PCB Component Gallery</span><button class="cap" aria-label="Close gallery"><svg><use href="#close"/></svg></button></div>
    <label class="pick"><svg viewBox="0 0 18 16"><path d="M2 14V3h5l2 2h7v9z" fill="#e8dd57" stroke="#7b7420"/><path d="M3 6h12" stroke="#fff9b0"/></svg>
      <select aria-label="Category"><option>Resistors</option></select><span class="cap"><svg><use href="#down"/></svg></span></label>
    <div class="gbody">
      <div class="list">
        <h2>Fixed Resistors</h2>
        <hr>
        <ul>
          <li class="r1"><svg viewBox="0 0 40 24"><path d="M11 7h8v10h-8z" fill="#0b1995" stroke="#0b1995"/><circle cx="20" cy="12" r="8" fill="#c9cff0" stroke="#334"/><circle cx="24" cy="12" r="3" fill="#fff" stroke="#0b1995" stroke-width="4"/><circle cx="15" cy="12" r="2" fill="#fff" stroke="#0b1995" stroke-width="3"/></svg><p><a href="#r1">Resistor</a><br>(0.1 in, 2.5 mm)</p></li>
          <li class="r2"><svg viewBox="0 0 40 38"><path d="M17 13h6v13h-6z" class="body"/><circle cx="20" cy="6" r="3"/><circle cx="20" cy="33" r="3"/></svg><p><a href="#r2">Resistor</a><br>(0.3 in, 7.6 mm)</p></li>
          <li class="r3"><svg viewBox="0 0 40 46"><path d="M16 11h8v24h-8z" class="body"/><circle cx="20" cy="4" r="3"/><circle cx="20" cy="41" r="3"/></svg><p><a href="#r3">Resistor</a><br>(0.4 in, 10.2 mm)</p></li>
          <li class="r4"><svg viewBox="0 0 40 60"><path d="M15 13h10v34H15z" class="body"/><circle cx="20" cy="6" r="3"/><circle cx="20" cy="53" r="3"/></svg><p><a href="#r4">Resistor</a><br>(0.5 in, 12.7 mm)</p></li>
          <li class="r5"><svg viewBox="0 0 40 66"><path d="M14 11h12v42H14z" class="body"/><circle cx="20" cy="4" r="3"/><circle cx="20" cy="60" r="3"/></svg><p><a href="#r5">Resistor</a><br>(0.6 in, 15.2 mm)</p></li>
        </ul>
        <h2 class="packs">Resistor Packs</h2>
      </div>
      <div class="vscroll slim"><button class="cap" aria-label="Scroll up"><svg><use href="#up"/></svg></button><span class="thumb"></span><span class="rest"></span><button class="cap" aria-label="Scroll down"><svg><use href="#down"/></svg></button></div>
    </div>
  </section>
</div>
</body>
</html>
```
FILE: styles.css
```css
* { box-sizing: border-box; }
html, body { height: 100%; }
body {
  margin: 0;
  padding: 0 138px 6px 151px;
  background: #000;
  color: #111;
  font: 11px/14px "Liberation Sans", Arial, sans-serif;
}
.defs { position: absolute; width: 0; height: 0; }
button, input, select { font: inherit; color: inherit; margin: 0; padding: 0; border: 0; background: none; border-radius: 0; }
button { display: flex; align-items: center; justify-content: center; white-space: nowrap; }
svg { fill: none; stroke: #151515; display: block; flex: none; }
.dim { stroke: #8a8a8a; }
.red, .r { stroke: #cf2c22; }
.h { fill: #8d2a24; stroke: #222; }
.n { fill: #eee8a0; stroke: #111; }

.desktop {
  position: relative;
  height: 100%;
  min-height: 714px;
  display: flex;
  flex-direction: column;
  overflow: hidden;
  background: #c2c2c2;
}
.top-edge { height: 6px; border-bottom: 1px solid #8c8c8c; background: #c8c8c8; display: flex; justify-content: center; }
.watermark {
  position: relative;
  z-index: 2;
  margin: -18px 4px 0 0;
  height: 32px;
  color: #fff;
  font: bold 24px/32px "Open Sans", sans-serif;
  text-shadow: 2px 2px 2px #222, -1px 1px 1px #444;
}

/* Toolbars */
.bar { display: flex; align-items: center; height: 25px; padding-left: 6px; border-top: 1px solid #f2f2f2; border-bottom: 1px solid #8e8e8e; border-right: 1px solid #8e8e8e; }
.bar button { width: 22px; height: 21px; }
.bar svg { width: 20px; height: 20px; }
.bar .sep { width: 9px; height: 20px; flex: none; background: linear-gradient(90deg, transparent 4px, #858585 4px 5px, #f4f4f4 5px 6px, transparent 6px); }
.bar .on { background: #e8e8e8; border: 1px solid; border-color: #858585 #fff #fff #858585; }
.bar .wide { width: 31px; }
.bar .wide b { border: 4px solid transparent; border-top: 5px solid #14145e; border-bottom: 0; margin-top: 5px; }
.bar-main { align-self: flex-start; }
.blue-board { --board: #555; }
.olive { --disk: #4a5022; }
.bar-row { display: flex; justify-content: space-between; }
.far-a { margin-right: 157px; }
.far-b { margin-right: 144px; padding-right: 2px; }
.count { width: 24px; height: 20px; border: 2px solid #666; padding-left: 4px; font-size: 13px; color: #888; }

/* Work area */
.work { flex: 1; display: grid; grid-template-columns: 96px 1fr 169px; min-height: 0; border-top: 1px solid #fff; }
.tools { display: grid; grid-template-columns: repeat(3, 32px); grid-auto-rows: 28px; align-content: start; padding-top: 3px; }
.tools svg { width: 24px; height: 24px; }
.tools .on { background: #ececec; border: 1px solid; border-color: #888 #fff #fff #888; }
.tools .letter { font: bold 25px/28px "Liberation Serif", serif; }
.cap {
  width: 15px; height: 14px; flex: none;
  display: flex; align-items: center; justify-content: center;
  background: #c6c6c6;
  border: 1px solid; border-color: #f8f8f8 #2c2c2c #2c2c2c #f8f8f8;
}
.cap svg { width: 10px; height: 9px; }
.mdi { display: flex; flex-direction: column; background: #b9b9b9; border-right: 2px solid #eee; }
.mdi-scroll { flex: 1; align-self: flex-end; width: 15px; display: flex; flex-direction: column; padding-top: 8px; background: #d8d8d8; }
.mdi-scroll span { flex: 1; }
.mdi-foot { display: flex; justify-content: flex-end; padding: 1px 14px 1px 0; background: #d8d8d8; }
.objects { --line: #b2b2b2; padding: 1px 0 4px 10px; display: flex; flex-direction: column; min-width: 0; border-left: 1px solid #888; }
.objects-head { display: flex; align-items: center; height: 18px; margin-bottom: 2px; }
.objects-head .cap { height: 15px; }
.objects-head .big { width: 20px; margin-left: 2px; }
.objects-head .big svg { width: 18px; }
.objects-head .locate { width: 44px; margin-left: 7px; color: #888; font-size: 12px; text-shadow: 1px 1px #fff; }
.objects-head strong { margin-left: 26px; font-size: 12px; }
.objects-head .end { margin-left: auto; width: 12px; }
.objects-tree { flex: 1; margin-left: 2px; border: 2px solid #444; border-color: #444 #444 #eee #444; border-right: 0; border-spacing: 0; table-layout: fixed; width: 100%; font-size: 12px; }
.objects-tree td { padding: 0; text-align: center; border-right: 1px solid var(--line); border-bottom: 1px solid var(--line); vertical-align: middle; }
.objects-tree .labels td { height: 20px; line-height: 16px; vertical-align: top; }
.objects-tree td:first-child { text-align: left; }
.objects-tree .tall td { height: 34px; text-align: center; }
.objects-tree .fill td { height: 400px; }
.c1 { width: 17px; } .c2 { width: 32px; } .c3 { width: 34px; }
.tree { width: 102px; height: 66px; }

/* Palette and status bars */
.palette-row { height: 36px; display: flex; justify-content: space-between; align-items: center; padding: 0 20px 6px 12px; border-top: 1px solid #eee; border-bottom: 1px solid #8a8a8a; }
.stitch { width: 130px; height: 22px; margin-top: 2px; appearance: none; background: #fff; border: 2px solid #333; padding-left: 2px; font: bold 13px/16px "Liberation Sans", sans-serif; }
.palette { display: flex; align-items: center; border-right: 1px solid #888; padding-right: 25px; }
.palette button { width: 24px; height: 19px; border: 2px solid #111; font-size: 11px; }
.palette .next { width: 26px; height: 22px; border: 1px solid #ddd; margin-left: 2px; background: #c8c8c8; }
.next svg { width: 15px; height: 15px; }
.y1 { background: #ffffb8; } .p1 { background: #ff8c80; } .b1 { background: #6b3000; } .y2 { background: #ffd800; } .b2 { background: #0b78f6; } .g1 { background: #66da10; } .o1 { background: #ff7808; }
.status { display: flex; height: 20px; padding-top: 1px; }
.status span { border: 1px solid; border-color: #858585 #f4f4f4 #f4f4f4 #858585; padding: 0 2px; white-space: pre; margin-right: 2px; }
.mono { font: bold 13px/18px "DejaVu Sans Mono", monospace; }
.s-a { width: 60px; text-align: right; }
.s-b { width: 309px; }
.s-c { flex: 1; }
.s-d { width: 99px; }
.status .s-e { width: 79px; margin-right: 0; }
.last { height: 17px; padding-top: 0; line-height: 16px; }
.s-left { width: 441px; }
.status .s-jump { flex: 1; margin-right: 0; }

/* Windows */
.window { position: absolute; display: flex; flex-direction: column; background: #c4c4c4; border: 1px solid; border-color: #eee #333 #333 #eee; outline: 1px solid #8a8a8a; outline-offset: -2px; padding: 2px 3px; }
.title { display: flex; align-items: center; flex: none; height: 17px; padding: 0 2px; font-weight: bold; font-size: 12px; }
.title span { flex: 1; white-space: nowrap; overflow: hidden; }
.title .ti { width: 16px; height: 16px; margin-right: 2px; }
.cap.gap { margin-left: 2px; }
.title .cap, .caps .cap { width: 16px; height: 14px; }
.title .cap.gap { width: 15px; }
.blue { color: #fff; background: linear-gradient(90deg, #0b1582, #0a4db6 55%, #0a85d2); }
.gray { color: #d6d6d6; background: linear-gradient(90deg, #808080, #b8b8b8); }
.back { left: 144px; right: 217px; top: 31px; bottom: 184px; }
.back .title { height: 19px; }
.back-strip { height: 21px; margin-top: 3px; background: #fff; display: flex; justify-content: flex-end; }
.back-strip svg { width: 16px; height: 20px; }
.back-gray { height: 56px; border-bottom: 1px solid #777; background: linear-gradient(#c4c4c4 31px, #888 31px 32px, #c4c4c4 32px); }
.back-scroll { display: flex; justify-content: flex-end; }
.back-list { flex: 1; background: #dcdcdc; display: flex; justify-content: flex-end; overflow: hidden; }
.back-list span { width: 20px; padding-top: 18px; line-height: 17px; }

.wizard { left: 94px; right: 239px; top: 58px; bottom: 46px; }
.menu { display: flex; align-items: center; flex: none; height: 22px; margin-top: 1px; padding-left: 8px; gap: 10px; border-bottom: 1px solid #f2f2f2; }
.menu .mi { width: 16px; height: 16px; margin-right: -3px; }
.caps { display: flex; margin-left: auto; margin-right: 2px; }
.wbar { flex: none; align-self: flex-start; height: 25px; padding-left: 8px; }
.wbar .sep { width: 7px; }
.wbar .double { width: 10px; }
.wbar .wide { width: 32px; justify-content: flex-start; padding-left: 2px; }
.wbar .wide b { border-width: 3px; border-top: 4px solid #111; border-bottom: 0; margin: 0 0 0 1px; }
.aa { color: #cf2c22; font: italic bold 13px/16px "Liberation Serif", serif; }
.wbody { flex: 1; display: flex; min-height: 0; }
.tabs { width: 22px; flex: none; align-self: flex-start; display: flex; flex-direction: column; gap: 10px; padding-top: 12px; border-right: 1px solid #888; border-bottom: 1px solid #888; }
.tabs button { writing-mode: vertical-rl; }
.tabs .more { border-top: 1px solid #888; padding: 8px 0 4px; }
.tabs .more svg { width: 6px; height: 6px; }
.view { flex: 1; min-width: 0; display: grid; grid-template: 1fr 17px / 1fr 16px; margin: 0 2px; border: 1px solid #222; border-right: 0; border-bottom: 0; }
.canvas { position: relative; background: #000; min-height: 0; }
.pcb { width: 100%; height: 100%; position: absolute; }
.tip { position: absolute; left: 41%; top: 390px; margin-left: -2px; padding: 1px; background: #ffffe6; border: 1px solid #000; white-space: nowrap; line-height: 14px; }
.rings { fill: #000; stroke: #fff; stroke-width: 6; }
.pads { stroke: #fff; stroke-linecap: round; }
.dots { stroke: #000; stroke-linecap: round; }
.silk text { font: 19px "Liberation Sans", sans-serif; fill: #ffd02a; stroke: none; }
.vscroll { display: flex; flex-direction: column; background: #dedede; }
.vscroll .cap { width: 100%; height: 15px; }
.pre { flex: 30; }
.thumb, .h-thumb { background: #c6c6c6; border: 1px solid; border-color: #f4f4f4 #333 #333 #f4f4f4; }
.vscroll .thumb { flex: 105; }
.rest { flex: 334; }
.hscroll { display: flex; background: #dedede; }
.hscroll .cap { width: 15px; height: 16px; }
.pager { display: flex; align-items: center; width: 140px; background: #c6c6c6; }
.pager button { width: 16px; }
.pager svg { width: 9px; height: 9px; }
.pager span { margin: 0 12px; white-space: nowrap; }
.h-pre { flex: 166; } .h-thumb { flex: 167; } .h-rest { flex: 105; }
.corner { background: #c6c6c6; }
.wstatus { display: flex; align-items: center; flex: none; height: 21px; margin-top: 2px; }
.wstatus span { display: flex; align-items: center; height: 18px; gap: 5px; padding-left: 3px; border-right: 1px solid #eee; border-left: 1px solid #999; white-space: nowrap; }
.wstatus .w1 { flex: 163; border: 0; }
.w2 { flex: 134; } .w3 { flex: 139; } .w4 { flex: 67; } .w5 { flex: 67; }
.wstatus .w6 { flex: 65; padding-left: 5px; }
.w2 svg { width: 24px; height: 12px; } .w3 svg { width: 16px; height: 14px; } .w4 svg { width: 13px; height: 12px; } .w5 svg { width: 14px; height: 14px; }
.grip { width: 14px; height: 14px; align-self: flex-end; }

.gallery { width: 232px; right: 0; top: 184px; bottom: 103px; padding-right: 0; padding-bottom: 2px; border-right: 0; outline: 0; }
.gallery .title .cap { width: 11px; margin-right: -2px; }
.pick { display: flex; align-items: center; height: 21px; margin: 3px 0 4px; background: #fff; border: 1px solid #222; border-right: 0; padding-left: 4px; }
.pick svg { width: 17px; height: 15px; }
.pick select { flex: 1; appearance: none; padding-left: 5px; }
.pick .cap { width: 13px; height: 18px; }
.pick .cap svg { width: 8px; height: 8px; }
.gbody { flex: 1; display: flex; min-height: 0; border: 1px solid #222; border-width: 2px 0 0 2px; background: #fff; }
.list { flex: 1; padding: 12px 0 0 5px; font-family: "Liberation Serif", "Times New Roman", serif; }
.list h2 { margin: 0; font-size: 15px; line-height: 20px; }
.list .packs { margin-top: 12px; }
.list hr { height: 2px; border: 0; margin: 2px 34px 4px 0; background: linear-gradient(90deg, #7d839c, #fff); }
.list ul { list-style: none; margin: 0; padding: 0; }
.list li { display: flex; align-items: center; gap: 27px; padding-left: 15px; font-size: 12px; line-height: 15px; }
.list p { margin: 0; padding-top: 5px; }
.list a { color: #1a1a96; }
.list svg { width: 40px; overflow: visible; }
.list li:not(.r1) circle { fill: #fff; stroke: #0b1995; stroke-width: 3; }
.body { fill: #f0f0f0; stroke: #222; }
.r1 { height: 45px; } .r2 { height: 50px; } .r3 { height: 58px; } .r4 { height: 67px; } .r5 { height: 78px; }
.slim { width: 12px; }
.slim .thumb { flex: 124; } .slim .rest { flex: 220; }
```
